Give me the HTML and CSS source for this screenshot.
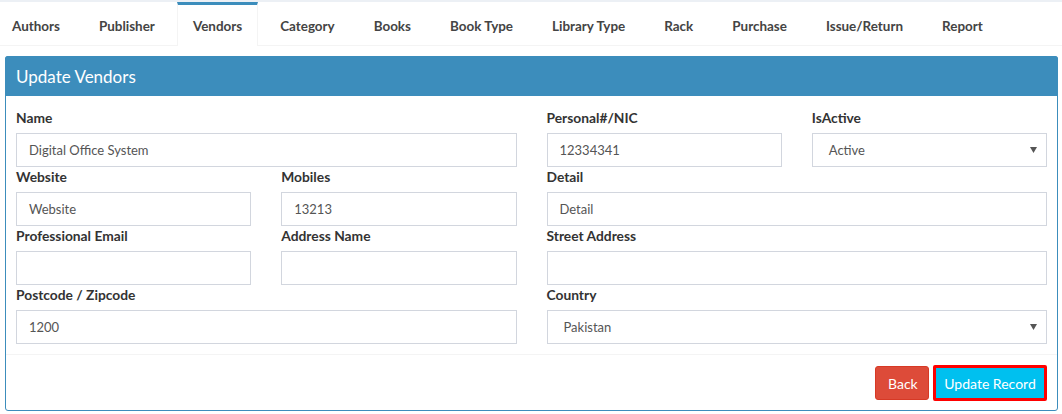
FILE: index.html
```html
<!DOCTYPE html>
<html>
<head>
<meta charset="utf-8">
<link rel="stylesheet" href="styles.css">
</head>
<body>
<div class="strip"></div>
<nav class="tabs">
  <a class="tab">Authors</a>
  <a class="tab">Publisher</a>
  <a class="tab active">Vendors</a>
  <a class="tab">Category</a>
  <a class="tab">Books</a>
  <a class="tab">Book Type</a>
  <a class="tab">Library Type</a>
  <a class="tab">Rack</a>
  <a class="tab">Purchase</a>
  <a class="tab">Issue/Return</a>
  <a class="tab">Report</a>
</nav>
<section class="box">
  <header class="box-header">Update Vendors</header>
  <div class="box-body">
    <div class="field span2">
      <label>Name</label>
      <div class="input">Digital Office System</div>
    </div>
    <div class="field">
      <label>Personal#/NIC</label>
      <div class="input">12334341</div>
    </div>
    <div class="field">
      <label>IsActive</label>
      <div class="input select"><span>Active</span><svg width="7" height="6" viewBox="0 0 7 6"><path d="M0 0H7L3.5 6Z" fill="#555"/></svg></div>
    </div>
    <div class="field">
      <label>Website</label>
      <div class="input">Website</div>
    </div>
    <div class="field">
      <label>Mobiles</label>
      <div class="input">13213</div>
    </div>
    <div class="field span2">
      <label>Detail</label>
      <div class="input">Detail</div>
    </div>
    <div class="field">
      <label>Professional Email</label>
      <div class="input"></div>
    </div>
    <div class="field">
      <label>Address Name</label>
      <div class="input"></div>
    </div>
    <div class="field span2">
      <label>Street Address</label>
      <div class="input"></div>
    </div>
    <div class="field span2">
      <label>Postcode / Zipcode</label>
      <div class="input">1200</div>
    </div>
    <div class="field span2">
      <label>Country</label>
      <div class="input select"><span>Pakistan</span><svg width="7" height="6" viewBox="0 0 7 6"><path d="M0 0H7L3.5 6Z" fill="#555"/></svg></div>
    </div>
  </div>
  <footer class="box-footer">
    <button class="btn btn-back">Back</button>
    <button class="btn btn-update">Update Record</button>
  </footer>
</section>
</body>
</html>
```

FILE: styles.css
```css
* { box-sizing: border-box; }
html, body { margin: 0; padding: 0; background: #fff; }
body {
  font-family: "Lato", "Liberation Sans", sans-serif;
  color: #333;
  font-size: 14px;
}
.strip { height: 2px; background: #ecf0f5; }
.tabs {
  display: flex;
  height: 44px;
  border-bottom: 1px solid #f4f4f4;
  margin-left: -5px;
  gap: 5px;
}
.tab {
  display: flex;
  align-items: center;
  padding: 2px 16px 0;
  height: 43px;
  font-weight: 700;
  font-size: 13.45px;
  color: #444;
  border-top: 3px solid transparent;
  border-left: 1px solid transparent;
  border-right: 1px solid transparent;
}
.tab.active {
  border-top-color: #3c8dbc;
  border-left-color: #f4f4f4;
  border-right-color: #f4f4f4;
  height: 44px;
  background: #fff;
  padding: 1px 15px 0;
}
.box {
  margin: 10px 4px 0 5px;
  border: 1px solid #3c8dbc;
  border-radius: 3px;
}
.box-header {
  background: #3c8dbc;
  color: #fff;
  height: 40px;
  margin: -1px -1px 0;
  border-radius: 3px 3px 0 0;
  padding: 0 11px;
  display: flex;
  align-items: center;
  font-size: 17px;
}
.box-body {
  display: grid;
  grid-template-columns: repeat(4, 1fr);
  column-gap: 30px;
  padding: 12px 10px 10px;
}
.span2 { grid-column: span 2; }
.field label {
  display: block;
  font-weight: 700;
  font-size: 13.8px;
  line-height: 20px;
  margin-bottom: 5px;
  color: #333;
}
.input {
  height: 34px;
  border: 1px solid #d2d6de;
  padding: 0 12px;
  display: flex;
  align-items: center;
  font-size: 13px;
  color: #555;
}
.select {
  justify-content: space-between;
  padding: 0 9px 0 16px;
}
.box-footer {
  border-top: 1px solid #f4f4f4;
  padding: 10px 10px 9px;
  display: flex;
  justify-content: flex-end;
  align-items: center;
  gap: 4px;
}
.btn {
  font-family: inherit;
  font-size: 14px;
  color: #fff;
  border-radius: 3px;
  height: 34px;
  padding: 0 12px;
  cursor: pointer;
}
.btn-back {
  background: #dd4b39;
  border: 1px solid #d73925;
  width: 54px;
}
.btn-update {
  background: #00c0ef;
  border: 3px solid #f00;
  border-radius: 2px;
  height: 36px;
  width: 114px;
  padding: 0 8px;
}
```
